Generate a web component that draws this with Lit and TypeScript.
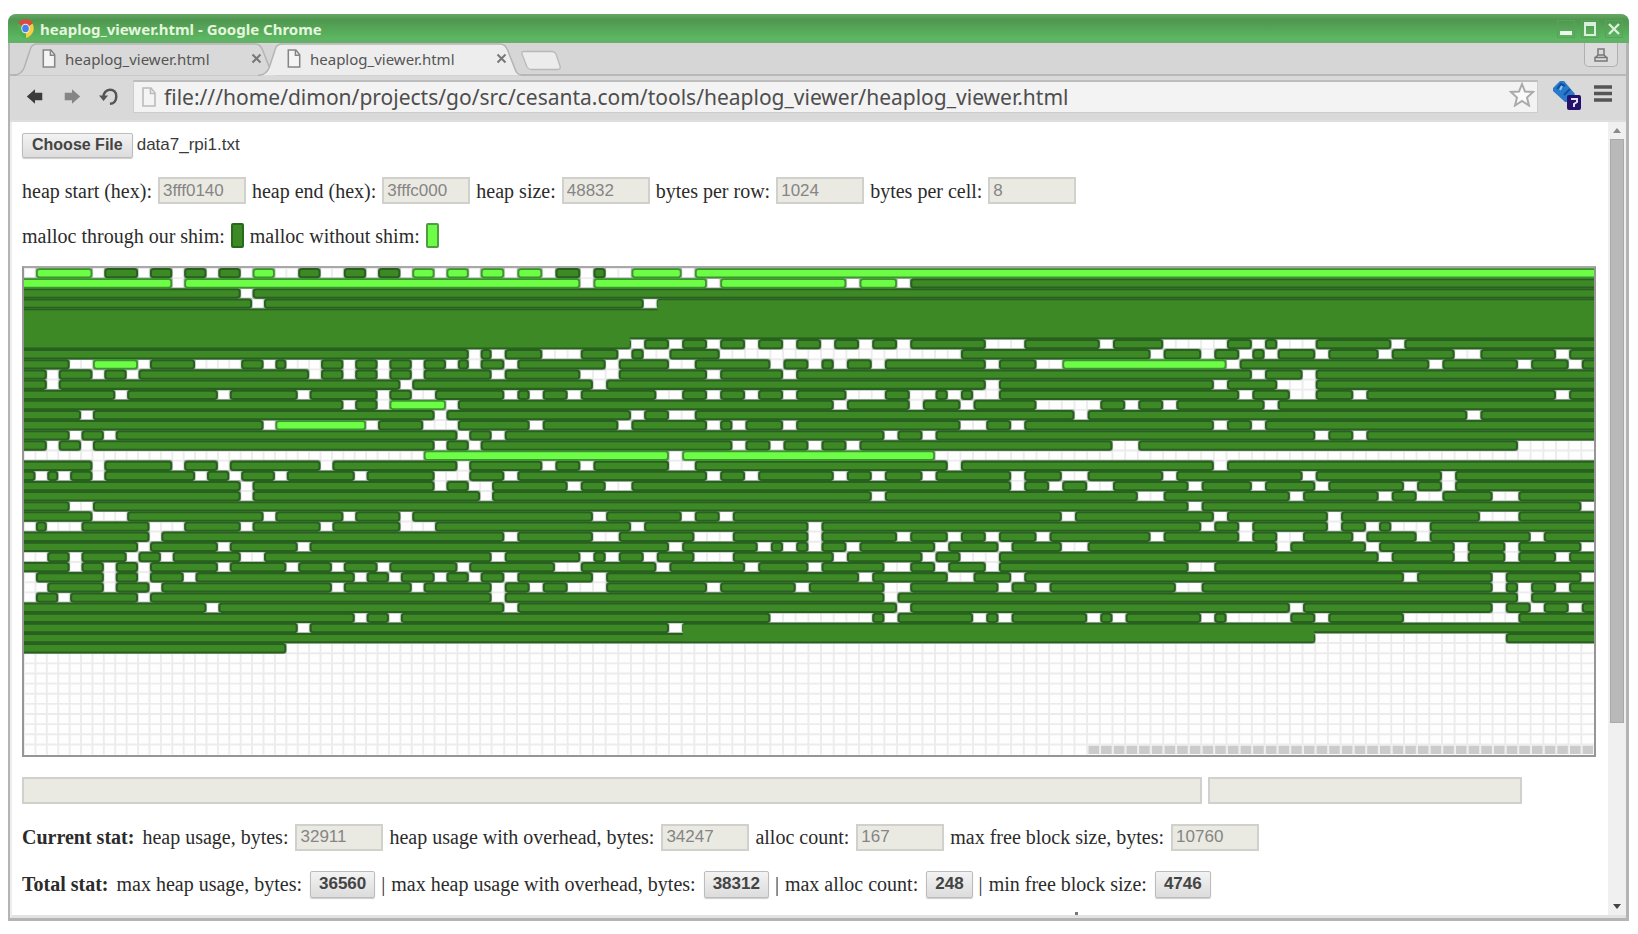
import { LitElement, html, css, svg } from "lit";
import { customElement } from "lit/decorators.js";

const COLS = 128;
const ROWS = 48;
const NARROW = 41;
const CELL_H = 8;

/* Left edge of a column: the first columns are 9 units wide, the rest 10. */
const colX = (c: number) => (c <= NARROW ? c * 9 : NARROW * 9 + (c - NARROW) * 10);
const MAP_W = colX(COLS);
const MAP_H = ROWS * CELL_H;

/* Free cells of each row, as column numbers and ranges. */
const FREE: string[] = [
  "0 6 10 13 16 19 22-23 26-27 30 33 36 39 42 45 48 50-51 56",
  "13 48 58 69 73",
  "19",
  "20 53",
  "",
  "",
  "",
  "52 55 58 61 64 67 70 73 80-82 89 94-98 101 103-105 112",
  "39 41 45-47 51 53-54 59-77 93 97 100 102 106 111 117-118 125",
  "4-5 10 15-18 21 23-25 28 31 34 37 39 42 50 55-56 63 66 68 71 80 84-85 99 115 122 126",
  "2 6 9 25 28 31 34 41 48-50 58 64 101 105",
  "2 33 49 80 98 103-105",
  "8 17 24 31 34-35 42 44 47 54-55 58 61 64 69-71 74-75 77 79-80 100 104-105 109 125",
  "28 31 37 68 74 78 84-88 91 94 102",
  "5 36 52 55-56 87 118",
  "21 30 35-37 44 51 58 60 64 78-79 82 98 101",
  "4 7 38 41 72 75 106 109",
  "2 5 36 39 60 63 66 69 90-91 122-127",
  "0-34 55 76-127",
  "6 13 17 26 38 45 48 55-56 77 98",
  "1 3 6 15 18 22 29 36-38 42 58 61 68 71 75 82 86-87 94 105 116",
  "19 36 39-40 47 50-51 82 85 88-89 96 101 106 113 116",
  "19 40 71 92-93 104 111 114-115 120-121",
  "4-5 96 127",
  "6-8 21 28 33 49 56 59 86 98 107 119-121",
  "0 2-4 11-13 19 26 33-35 52 66 97 100 107 110 112-114",
  "11 42 49-50 57-59 66 73 77 80 84 93 100 103-104 109 114 123",
  "10 17 24 55 62 64 66 69 76 81 86-87 103 110 117 121 127",
  "0-1 4 9 12 19-20 41 48 50 53 57-59 68 75 78-80 111 117 121 125",
  "4 7 10 17 23 27 31 38 46-47 54 61 66 72-73 76 80 96-97",
  "0 7 10 14 29 32 36 39 42 49 70 77-78 82 113 120 127",
  "0-1 7 11 27 34 41 44 47-49 58 65 72-73 81 84 95-96 120 122 125",
  "0 3 10 41 72 122",
  "16 42 73 104 120 123 126",
  "29 32 63-70 72 79 81 88 90 97 99-103 106 113-121",
  "24 55",
  "106-120",
  "23-127",
];

/* Runs allocated without the shim: row -> first columns of the runs. */
const RAW: Record<number, number[]> = {
  0: [1, 20, 34, 37, 40, 43, 52, 57],
  1: [0, 14, 49, 59, 70],
  9: [6, 86],
  13: [32],
  15: [22],
  18: [35, 56],
};

/* Places where a run without the shim follows another run with no gap. */
const SPLIT: Record<number, number[]> = {
  9: [86],
};

/* Blocks longer than a row, drawn without seams: [col, row, cols, rows]. */
const BLOCKS = [
  [54, 3, 74, 2],
  [0, 4, 128, 3],
  [0, 6, 52, 2],
  [56, 35, 50, 2],
];

interface Run { row: number; from: number; to: number; raw: boolean }

function runs(): Run[] {
  const out: Run[] = [];
  FREE.forEach((spec, row) => {
    const used = new Array(COLS).fill(true);
    for (const part of spec.split(" ").filter(Boolean)) {
      const [a, b] = part.split("-").map(Number);
      for (let c = a; c <= (b ?? a); c++) used[c] = false;
    }
    let c = 0;
    while (c < COLS) {
      if (!used[c]) {
        c++;
        continue;
      }
      const from = c;
      do c++; while (c < COLS && used[c] && !SPLIT[row]?.includes(c));
      out.push({ row, from, to: c, raw: !!RAW[row]?.includes(from) });
    }
  });
  return out.sort((a, b) => Number(a.raw) - Number(b.raw));
}

@customElement("heap-map")
export class HeapMap extends LitElement {
  static styles = css`
    :host { display: block; border: 2px solid #969696; border-top-color: #a8a8a8; }
    .map { display: block; width: 100%; height: auto; background: #fefefe; }
    .line { stroke: #ececec; stroke-width: 1.5; }
    .shim { fill: #3c8925; stroke: #28601f; stroke-width: 1.6; }
    .raw { fill: #6efd47; stroke: #3a962a; stroke-width: 1.4; }
    .block { fill: #3c8925; }
    .halo { fill: #a4b0a4; }
    .tail { fill: #cbcbcb; }
  `;

  render() {
    const all = runs();
    const span = (r: Run, grow: number) => {
      const left = r.from === 0 ? -6 : colX(r.from) + 0.6 - grow;
      const right = r.to === COLS ? MAP_W + 6 : colX(r.to) - 0.2 + grow;
      return { x: left, w: right - left };
    };
    return html`
      <svg class="map" viewBox="0 0 ${MAP_W} ${MAP_H}" role="img" aria-label="Heap map">
        ${Array.from({ length: COLS }, (_, c) => svg`<line class="line" x1=${colX(c)} x2=${colX(c)} y1="0" y2=${MAP_H}></line>`)}
        ${Array.from({ length: ROWS }, (_, r) => svg`<line class="line" x1="0" x2=${MAP_W} y1=${r * CELL_H} y2=${r * CELL_H}></line>`)}
        ${Array.from({ length: 40 }, (_, i) => svg`<rect class="tail" x=${colX(88 + i) + 1} y=${MAP_H - 7} width="8.4" height="6.6"></rect>`)}
        ${all.map((r) => {
          const s = span(r, 0.5);
          return svg`<rect class="halo" x=${s.x} y=${r.row * CELL_H - 0.6} width=${s.w} height="9.2" rx="1.5"></rect>`;
        })}
        ${all.map((r) => {
          const s = span(r, 0);
          return svg`<rect class=${r.raw ? "raw" : "shim"} x=${s.x + 0.6} y=${r.row * CELL_H + 0.8} width=${s.w - 1.2} height="6.6" rx="2"></rect>`;
        })}
        ${BLOCKS.map(([c, r, w, h]) => {
          const left = c === 0 ? 0 : colX(c) + 1;
          const right = c + w === COLS ? MAP_W : colX(c + w) - 1;
          return svg`<rect class="block" x=${left} y=${r * CELL_H + 1.6} width=${right - left} height=${h * CELL_H - 3}></rect>`;
        })}
      </svg>
    `;
  }
}

const pageIcon = html`<svg class="page-icon" viewBox="0 0 14 20" aria-hidden="true">
  <path d="M1 1h8l4 5v13H1z" fill="#f4f4f4" stroke="currentColor" stroke-width="1.6"></path>
  <path d="M8.5 1v5.5H13" fill="none" stroke="currentColor" stroke-width="1.6"></path>
</svg>`;

@customElement("app-root")
export class AppRoot extends LitElement {
  static styles = css`
    :host {
      display: flex; box-sizing: border-box; min-height: 100vh;
      padding: 14px 9px 13px 8px; background: #fff;
      font: 20px/24px "Liberation Serif", serif; color: #2b2b2b;
    }
    * { box-sizing: border-box; }
    button, input { font: inherit; color: inherit; margin: 0; }
    .window {
      flex: 1; min-width: 0; display: flex; flex-direction: column;
      border-radius: 8px 8px 0 0; overflow: hidden; background: #d8d8d8;
    }
    .title {
      display: flex; align-items: center; gap: 6px; height: 29px; padding: 0 6px 0 9px;
      background: linear-gradient(#66a866, #4f974f 20%, #5cb762 85%, #69ad6b);
      font: bold 15px/20px "Noto Sans", sans-serif; color: #e6f5dd;
    }
    .chrome-icon { width: 17px; height: 20px; }
    .caption { flex: 1; }
    .wbtn { display: grid; place-items: center; width: 18px; height: 18px; padding: 0; border: 1px solid #57a357; background: none; }
    .wbtn svg { width: 12px; height: 14px; }
    .frame { flex: 1; display: flex; flex-direction: column; border: solid #b4b4b4; border-width: 0 3px 3px 2px; }
    .tabs { display: flex; align-items: flex-start; height: 33px; padding-left: 3px; border-bottom: 2px solid #b8b8b8; background: #d6d6d6; }
    .tab {
      position: relative; display: flex; align-items: center; width: 272px; height: 33px;
      padding: 0 22px 2px 29px; font: 15px/20px "Noto Sans", sans-serif; color: #555;
    }
    .tab + .tab { margin-left: -27px; }
    .shape { position: absolute; inset: 0; width: 100%; height: 100%; }
    .tab > :not(.shape) { position: relative; }
    .tab .page-icon { width: 14px; height: 19px; color: #858585; margin-right: 9px; }
    .tab-name { flex: 1; white-space: nowrap; }
    .close { display: grid; place-items: center; padding: 0; border: 0; background: none; width: 14px; height: 14px; }
    .close svg { width: 11px; height: 11px; }
    .new { padding: 0; border: 0; background: none; width: 40px; height: 21px; margin: 7px 0 0 -9px; }
    .new svg, .user svg { display: block; }
    .user { margin: 0 8px 0 auto; padding: 5px 9px; width: 34px; height: 24px; border: 1px solid #b0b0b0; border-top: 0; border-radius: 0 0 5px 5px; background: #dcdcdc; }
    .bar { display: flex; align-items: center; height: 46px; padding: 0 14px 3px 6px; border-bottom: 2px solid #dedede; background: #d9d9d9; }
    .nav { display: grid; place-items: center; width: 37px; padding: 0; border: 0; background: none; height: 24px; }
    .nav svg { width: 20px; height: 19px; }
    .omni {
      flex: 1; display: flex; align-items: center; gap: 7px; height: 33px; padding: 0 2px 0 7px; margin-left: 6px;
      background: #f3f3f3; border: 1px solid #ccc; border-top: 2px solid #bcbcbc;
    }
    .omni .page-icon { width: 16px; height: 20px; color: #bbb; }
    .url { flex: 1; min-width: 0; padding: 0; border: 0; background: none; outline: 0; font: 21px/26px "Noto Sans", sans-serif; color: #4e4e4e; }
    .icon-btn { padding: 0; border: 0; background: none; display: block; }
    .ext { margin: 0 12px 0 14px; }
    .body { flex: 1; display: flex; background: #fff; border-bottom: 3px solid #e2e2e2; border-left: 2px solid #eee; }
    .page { flex: 1; min-width: 0; padding: 10px 12px 0 10px; }
    .top { display: flex; flex-direction: column; gap: 19px; margin-bottom: 18px; }
    .bottom { display: flex; flex-direction: column; gap: 20px; margin-top: 20px; }
    .row { display: flex; align-items: center; gap: 6px; height: 27px; white-space: nowrap; }
    .row b { margin-right: 2px; }
    .row.file { height: 26px; gap: 4px; font: 17px/20px "Liberation Sans", sans-serif; color: #3a3a3a; }
    .row.legend { height: 25px; }
    .field { display: flex; align-items: center; gap: 6px; }
    .bottom .field { gap: 7px; }
    .box {
      width: 88px; height: 27px; padding: 0 3px; border: 2px solid #d0d0cc; border-radius: 0;
      background: #eaeae3; font: 17px/20px "Liberation Sans", sans-serif; color: #858585;
    }
    .wide { flex: 1170; min-width: 0; }
    .side { flex: 304; min-width: 0; }
    .notes { padding-right: 74px; }
    .btn {
      height: 27px; padding: 0 8px; border: 1px solid #bcbcbc; border-radius: 2px;
      background: linear-gradient(#f3f3f3, #dcdcdc); box-shadow: 0 1px 1px #ccc;
      font: bold 17px/20px "Liberation Sans", sans-serif; color: #444;
    }
    .file .btn { height: 25px; padding: 0 9px; font-size: 16px; }
    .chip { width: 13px; height: 25px; border: 2px solid #286a1c; border-radius: 2px; background: #3c8925; }
    .chip.raw { background: #6efd47; border-color: #4f9c42; }
    .stat .btn { margin-left: 2px; }
    .dot { width: 3px; height: 3px; margin: -6px 0 0 1053px; background: #777; }
    .scroll { display: flex; flex-direction: column; align-items: center; width: 18px; background: #f0f0f0; }
    .scroll svg { width: 10px; height: 17px; }
    .thumb { width: 14px; flex: 585; background: #b9b9b9; border: 1px solid #aaa; }
    .rest { flex: 176; }
  `;

  private fields = [
    ["heap start (hex):", "3fff0140"],
    ["heap end (hex):", "3fffc000"],
    ["heap size:", "48832"],
    ["bytes per row:", "1024"],
    ["bytes per cell:", "8"],
  ];

  private current = [
    ["heap usage, bytes:", "32911"],
    ["heap usage with overhead, bytes:", "34247"],
    ["alloc count:", "167"],
    ["max free block size, bytes:", "10760"],
  ];

  private total = [
    ["max heap usage, bytes:", "36560"],
    ["max heap usage with overhead, bytes:", "38312"],
    ["max alloc count:", "248"],
    ["min free block size:", "4746"],
  ];

  private field([name, value]: string[]) {
    return html`<label class="field"><span>${name}</span><input class="box" .value=${value} disabled /></label>`;
  }

  private tab(active: boolean) {
    return html`<div class="tab" role="tab" aria-selected=${active}>
      <svg class="shape" viewBox="0 0 268 32" preserveAspectRatio="none" aria-hidden="true">
        <path d="M0 31.5C6 31 9 29 11 24L17 6C18 2 20 1 24 1H238C243 1 244 3 246 7L254 27C255 30 257 31.5 264 31.5Z"
          fill=${active ? "#ededed" : "#d9d9d9"}></path>
        <path d="M0 31.5C6 31 9 29 11 24L17 6C18 2 20 1 24 1H238C243 1 244 3 246 7L254 27C255 30 257 31.5 264 31.5"
          fill="none" stroke="#b4b4b4" stroke-width="1.5"></path>
      </svg>
      ${pageIcon}
      <span class="tab-name">heaplog_viewer.html</span>
      <button class="close" aria-label="Close tab">
        <svg viewBox="0 0 11 11"><path d="M1.5 1.5l8 8M9.5 1.5l-8 8" stroke="#777" stroke-width="2"></path></svg>
      </button>
    </div>`;
  }

  render() {
    return html`
      <main class="window">
        <header class="title">
          <svg class="chrome-icon" viewBox="0 0 17 20" aria-hidden="true">
            <path d="M8.500 10L1 4C5-1 13-1 16 4z" fill="#db4a3c"></path>
            <path d="M8.500 10L15.500 4.500C18 9 17 16 9 19z" fill="#f7cf3d"></path>
            <path d="M8.500 10L9 19C3 18-1 10 1 4z" fill="#4caf50"></path>
            <ellipse cx="8.500" cy="9.500" rx="4.200" ry="4.800" fill="#e8eefb"></ellipse>
            <ellipse cx="8.500" cy="9.500" rx="3.300" ry="3.800" fill="#4a80e8"></ellipse>
          </svg>
          <span class="caption">heaplog_viewer.html - Google Chrome</span>
          <button class="wbtn" aria-label="Minimize"><svg viewBox="0 0 12 14"><path d="M0 9h12v4H0z" fill="#eef8ee"></path></svg></button>
          <button class="wbtn" aria-label="Maximize"><svg viewBox="0 0 12 14"><path d="M1 1h10v12H1zM1 3h10" fill="none" stroke="#d9efd9" stroke-width="2"></path></svg></button>
          <button class="wbtn" aria-label="Close"><svg viewBox="0 0 12 14"><path d="M1 2l10 10M11 2L1 12" stroke="#d9efd9" stroke-width="2.400"></path></svg></button>
        </header>
        <div class="frame">
          <nav class="tabs" role="tablist">
            ${this.tab(false)} ${this.tab(true)}
            <button class="new" aria-label="New tab">
              <svg width="40" height="21" viewBox="0 0 40 21"><path d="M3 1.500H31C33 1.500 34 2 35 4L39 16C39.500 18.500 39 19.500 37 19.500H10C8 19.500 7 18.500 6 17L1 4C.500 2.500 1 1.500 3 1.500Z" fill="#ececec" stroke="#b9b9b9" stroke-width="1.300"></path></svg>
            </button>
            <button class="user" aria-label="User">
              <svg width="14" height="14" viewBox="0 0 14 14"><path d="M4 1h6v6H4zM1 9.500h12V13H1zM4 7L1 10M10 7l3 3" fill="none" stroke="#777" stroke-width="1.500"></path></svg>
            </button>
          </nav>
          <div class="bar">
            <button class="nav" aria-label="Back"><svg viewBox="0 0 22 20"><path d="M2 10l9-8v4h8v8h-8v4z" fill="#3c3c3c"></path></svg></button>
            <button class="nav" aria-label="Forward"><svg viewBox="0 0 22 20"><path d="M20 10l-9-8v4H3v8h8v4z" fill="#858585"></path></svg></button>
            <button class="nav" aria-label="Reload"><svg viewBox="0 0 22 20"><path d="M5 11C4 0 20 0 19 10C19 15 16 18 12 18" fill="none" stroke="#555" stroke-width="2.800"></path><path d="M0 9h10l-5 6z" fill="#555"></path></svg></button>
            <div class="omni">
              ${pageIcon}
              <input class="url" aria-label="Address" .value=${"file:///home/dimon/projects/go/src/cesanta.com/tools/heaplog_viewer/heaplog_viewer.html"} />
              <button class="icon-btn" aria-label="Bookmark">
                <svg width="26" height="25" viewBox="0 0 26 25"><path d="M13 2l3 7.500 8 .500-6 5.500 2 8-7-4.500-7 4.500 2-8L2 10l8-.500z" fill="#fafafa" stroke="#aaa" stroke-width="2"></path></svg>
              </button>
            </div>
            <button class="icon-btn ext" aria-label="Extension">
              <svg width="30" height="32" viewBox="0 0 30 32">
                <path d="M1 10L8 3h4l11 13-6 8h-4L1 13z" fill="#2878cc"></path>
                <path d="M5 11l4-5 4 2M12 17l6-6" fill="none" stroke="#134f96" stroke-width="2"></path>
                <path d="M10 8l-2 4" stroke="#8cc4f4" stroke-width="2"></path>
                <rect x="15" y="17" width="14" height="15" rx="2" fill="#25106b"></rect>
                <path d="M19 21h6v3l-3 2v3" fill="none" stroke="#e4def8" stroke-width="2"></path>
              </svg>
            </button>
            <button class="icon-btn" aria-label="Menu">
              <svg width="18" height="20" viewBox="0 0 18 20"><path d="M0 3h18M0 9.500h18M0 16h18" stroke="#555" stroke-width="3.400"></path></svg>
            </button>
          </div>
          <div class="body">
            <section class="page">
              <div class="top">
                <div class="row file"><button class="btn">Choose File</button><span>data7_rpi1.txt</span></div>
                <div class="row">${this.fields.map((f) => this.field(f))}</div>
                <div class="row legend">
                  <span>malloc through our shim:</span><span class="chip"></span>
                  <span>malloc without shim:</span><span class="chip raw"></span>
                </div>
              </div>
              <heap-map></heap-map>
              <div class="bottom">
                <div class="row notes">
                  <input class="box wide" aria-label="Block details" disabled />
                  <input class="box side" aria-label="Address details" disabled />
                </div>
                <div class="row"><b>Current stat:</b>${this.current.map((f) => this.field(f))}</div>
                <div class="row stat"><b>Total stat:</b>
                  ${this.total.map(([name, value], i) => html`${i ? html`<span>|</span>` : ""}<span>${name}</span><button class="btn">${value}</button>`)}
                </div>
                <div class="dot"></div>
              </div>
            </section>
            <div class="scroll" aria-hidden="true">
              <svg viewBox="0 0 10 17"><path d="M1 11l4-5 4 5z" fill="#8a8a8a"></path></svg>
              <div class="thumb"></div>
              <div class="rest"></div>
              <svg viewBox="0 0 10 17"><path d="M1 6h8l-4 5z" fill="#444"></path></svg>
            </div>
          </div>
        </div>
      </main>
    `;
  }
}
